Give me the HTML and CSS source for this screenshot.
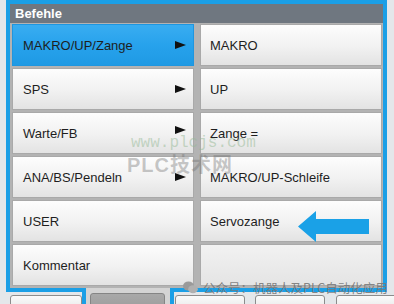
FILE: index.html
```html
<!DOCTYPE html>
<html lang="de">
  <head>
    <meta charset="UTF-8" />
    <title>Befehle</title>
    <link rel="stylesheet" href="styles.css">
  </head>
  <body>
    <div class="screen">
      <!-- Popup window -->
      <div class="window">
        <div class="title">Befehle</div>
        <div class="menu">
          <!-- Left column: groups -->
          <div class="col col-left">
            <div class="btn active"><span>MAKRO/UP/Zange</span><i class="more"></i></div>
            <div class="btn"><span>SPS</span><i class="more"></i></div>
            <div class="btn"><span>Warte/FB</span><i class="more up"></i></div>
            <div class="btn"><span>ANA/BS/Pendeln</span><i class="more"></i></div>
            <div class="btn"><span>USER</span></div>
            <div class="btn"><span>Kommentar</span></div>
          </div>
          <!-- Right column: commands -->
          <div class="col col-right">
            <div class="btn"><span>MAKRO</span></div>
            <div class="btn"><span>UP</span></div>
            <div class="btn"><span>Zange =</span></div>
            <div class="btn"><span>MAKRO/UP-Schleife</span></div>
            <div class="btn">
              <span>Servozange</span>
              <svg class="pointer" width="71" height="31" viewBox="0 0 71 31">
                <polygon points="0,15.5 18,0 18,8 71,8 71,23 18,23 18,31" fill="#1aa1e7" />
              </svg>
            </div>
            <div class="btn empty"></div>
          </div>
        </div>
      </div>

      <!-- Softkey bar below the popup -->
      <div class="dock">
        <div class="seg seg-first"><div class="tab w72"></div></div>
        <div class="seg seg-open"><div class="tab selected"></div></div>
        <div class="seg seg-rest">
          <div class="tab w70 first"></div>
          <div class="tab w70"></div>
          <div class="tab w70 last"></div>
        </div>
      </div>

      <!-- Watermarks -->
      <div class="wm-url">www.plcjs.com</div>
      <div class="wm-site">PLC技术网</div>
      <div class="wm-gzh">
        <svg width="15" height="13" viewBox="0 0 15 13">
          <ellipse cx="5.5" cy="5" rx="5.5" ry="4.6" fill="#9a9a9a" />
          <ellipse cx="10" cy="8.2" rx="4.8" ry="4" fill="#b0b0b0" />
        </svg>
        <span>公众号：机器人及PLC自动化应用</span>
      </div>
    </div>
  </body>
</html>
```

FILE: styles.css
```css
* {
  margin: 0;
  padding: 0;
  box-sizing: border-box;
}

body {
  font-family: "Liberation Sans", Arial, sans-serif;
  background-color: #e4e7ea;
  width: 394px;
  height: 304px;
  overflow: hidden;
}

.screen {
  position: relative;
  width: 394px;
  height: 304px;
}

/* --- Popup window --- */
.window {
  margin-left: 6px;
  width: 381px;
  border: 4px solid #1b9fe6;
  border-bottom: 0;
  background-color: #b3b3b3;
}

.title {
  height: 19px;
  background-color: #6f7780;
  color: #fff;
  font-weight: bold;
  font-size: 13px;
  line-height: 19px;
  padding-left: 5px;
}

.menu {
  display: flex;
  gap: 6px;
  padding: 1px 1px 2px 2px;
}

.col {
  display: flex;
  flex-direction: column;
  gap: 2px;
  width: 182px;
}

.btn {
  height: 42px;
  display: flex;
  align-items: center;
  background: linear-gradient(#fdfdfd, #f1f1f1 55%, #e3e3e3);
  border: 1px solid #a9a9a9;
  color: #1e1e1e;
  font-size: 13px;
}
.col-left .btn {
  padding: 0 7px 0 10px;
}
.col-right .btn {
  padding: 0 12px 0 9px;
}
.btn.active {
  background: linear-gradient(#39adf1, #27a2ec 50%, #1f9ae4);
  border-color: #1f96df;
}
.btn.empty {
  background: linear-gradient(#f2f2f2, #e4e4e4);
}

.more {
  margin-left: auto;
  width: 0;
  height: 0;
  border-left: 11px solid #111;
  border-top: 4.5px solid transparent;
  border-bottom: 4.5px solid transparent;
}
.more.up {
  margin-top: -6px;
}

.pointer {
  margin-left: auto;
  margin-top: 10px;
}

/* --- Softkey bar --- */
.dock {
  display: flex;
  height: 16px;
  margin-left: 6px;
}
.seg {
  display: flex;
  align-items: flex-start;
}
.seg-first {
  width: 80px;
  border-top: 4px solid #1b9fe6;
  border-right: 4px solid #1b9fe6;
  padding: 3px 0 0 4px;
}
.seg-open {
  width: 84px;
  background-color: #d4d4d4;
  padding: 5px 0 0 4px;
}
.seg-rest {
  width: 217px;
  border-top: 4px solid #1b9fe6;
  border-left: 4px solid #1b9fe6;
  padding: 3px 0 0 1px;
  gap: 10px;
}

.tab {
  height: 20px;
  border: 1px solid #8c8c8c;
  border-radius: 3px 3px 0 0;
  background: linear-gradient(#fafafa, #e2e2e2);
  flex-shrink: 0;
}
.tab.w72 {
  width: 72px;
}
.tab.w70 {
  width: 70px;
}
.tab.last {
  margin-left: 1px;
}
.tab.selected {
  width: 75px;
  background: linear-gradient(#a9a9a9, #9a9a9a);
  border-color: #858585;
}

/* --- Watermarks --- */
.wm-url {
  position: absolute;
  left: 131px;
  top: 134px;
  font-family: "Liberation Mono", monospace;
  font-size: 16px;
  color: rgba(150, 185, 150, 0.5);
}
.wm-site {
  position: absolute;
  left: 127px;
  top: 149px;
  font-family: "Liberation Sans", "Noto Sans CJK SC", sans-serif;
  font-weight: bold;
  font-size: 20px;
  letter-spacing: 1px;
  color: rgba(110, 110, 110, 0.38);
}
.wm-gzh {
  position: absolute;
  left: 183px;
  top: 278px;
  display: flex;
  align-items: center;
  gap: 5px;
  font-family: "Noto Sans CJK SC", sans-serif;
  font-size: 12.5px;
  color: rgba(120, 120, 120, 0.9);
}
```
